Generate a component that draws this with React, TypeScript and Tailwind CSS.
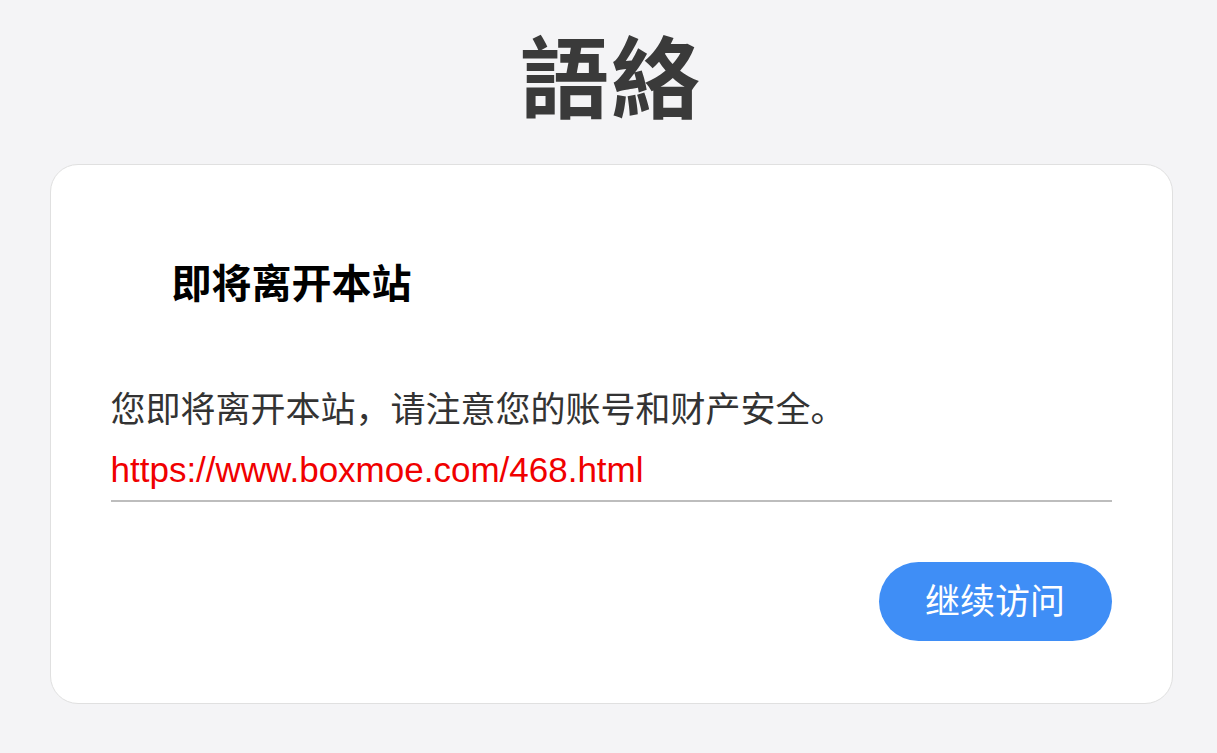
export default function App() {
  return (
    <div
      className="min-h-screen bg-[#f4f4f6] flex flex-col items-center pt-[28px] pl-[5px]"
      style={{ fontFamily: '"Liberation Sans", "Noto Sans CJK SC", sans-serif' }}
    >
      {/* Logo */}
      <h1
        className="text-[89px] leading-none font-bold text-[#3a3a3a] tracking-[2px]"
        style={{ fontFamily: '"Noto Sans CJK TC", "Noto Sans CJK SC", sans-serif' }}
      >
        語絡
      </h1>

      {/* Card */}
      <div className="mt-[47px] w-[1123px] bg-white border border-[#e0e0e0] rounded-[28px] px-[60px] pt-[99px] pb-[62px]">
        <h2 className="pl-[61px] text-[40px] leading-none font-bold text-black">即将离开本站</h2>

        <p className="mt-[88px] text-[35px] leading-none text-[#333]">
          您即将离开本站，请注意您的账号和财产安全。
        </p>
        <div className="mt-[25px] pb-[11px] border-b-2 border-[#bdbdbd]">
          <a href="#" className="text-[35px] leading-none text-[#f00000]">
            https://www.boxmoe.com/468.html
          </a>
        </div>

        <div className="mt-[60px] flex justify-end">
          <button className="h-[79px] w-[233px] rounded-full bg-[#3f8ef6] text-white text-[35px] leading-none">
            继续访问
          </button>
        </div>
      </div>
    </div>
  );
}
